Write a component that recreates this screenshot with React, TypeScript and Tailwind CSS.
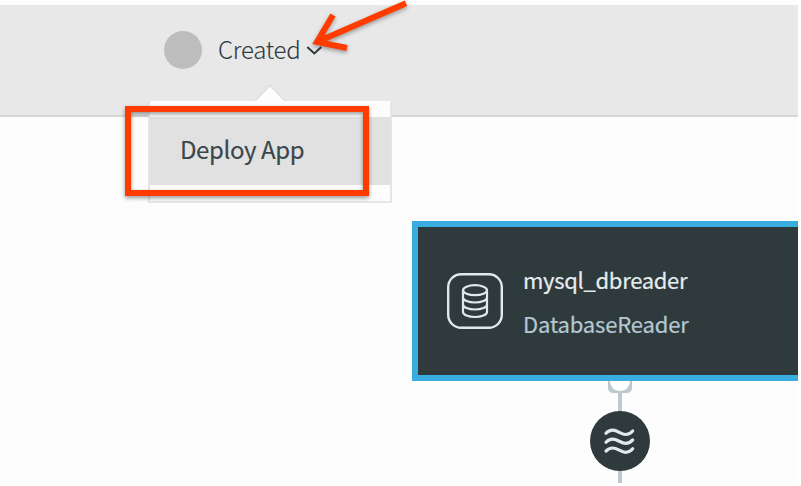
import React from 'react';

function StatusHeader() {
  return (
    <header className="h-[112px] w-full border-b-2 border-[#d6d6d6] bg-[#e8e8e8] pl-[164px] pt-[26px]">
      <div className="flex h-[38px] items-center">
        <span className="size-[38px] rounded-full bg-[#bdbdbd]" />
        <span className="ml-[16px] w-[82px] whitespace-nowrap pb-[2px] text-[24px] font-light leading-[36px] tracking-[-0.25px] text-[#2f3a3d] [-webkit-text-stroke:0.1px_#2f3a3d]">
          Created
        </span>
        <svg className="ml-[6px]" width="16" height="10" viewBox="0 0 16 10" fill="none">
          <path d="M1.300 2 8.300 8.500 15.300 2" stroke="#2f3a3d" strokeWidth="2" />
        </svg>
      </div>
    </header>
  );
}

function StatusMenu() {
  return (
    <div className="absolute left-[148px] top-[101px] h-[102px] w-[244px] border-2 border-t-0 border-[#e6e6e6] bg-[#fdfdfd] pt-4">
      <svg className="absolute left-[104px] top-[-18px]" width="32" height="19" viewBox="0 0 32 19">
        <path d="M0 18 16 1 32 18" fill="#dfdfdf" />
        <path d="M2 18 16 3.500 30 18V19H2Z" fill="#fdfdfd" />
      </svg>
      <button className="flex h-[68px] w-full items-center bg-[#e1e1e1] pb-[4px] pl-[30px] text-[24px] leading-[36px] tracking-[-0.4px] text-[#3a464a] [-webkit-text-stroke:0.15px_#3a464a]">
        Deploy App
      </button>
    </div>
  );
}

function ReaderNode() {
  return (
    <section className="absolute left-[412px] top-[221px] flex h-[160px] w-[386px] items-center border-6 border-r-0 border-[#3aade0] bg-[#2f3a3d] pl-[29px]">
      <svg width="56" height="56" viewBox="0 0 56 56" fill="none" stroke="#e1e9ec" strokeWidth="2.2">
        <rect x="1.200" y="1.200" width="53.600" height="53.600" rx="13" strokeWidth="2.4" />
        <ellipse cx="28" cy="17.2" rx="12" ry="5" />
        <path d="M16 17.2V39c0 2.8 5.4 5 12 5s12-2.200 12-5V17.200M16 24.500c0 2.800 5.400 5 12 5s12-2.200 12-5M16 31.500c0 2.800 5.400 5 12 5s12-2.200 12-5" />
      </svg>
      <div className="ml-[20px] flex flex-col text-[22px] leading-[44px]">
        <span className="tracking-[-0.3px] text-[#e6edef] [-webkit-text-stroke:0.2px_#e6edef]">mysql_dbreader</span>
        <span className="tracking-[-0.15px] text-[#b5c8d2] [-webkit-text-stroke:0.2px_#b5c8d2]">DatabaseReader</span>
      </div>
    </section>
  );
}

function StreamConnector() {
  return (
    <svg className="absolute left-[588px] top-[381px]" width="64" height="102" viewBox="0 0 64 102" fill="none">
      <path d="M32 10V102" stroke="#bcc9ce" strokeWidth="4" />
      <path d="M20 0H44V7Q44 12 38 12H26Q20 12 20 7Z" fill="#bcc9ce" />
      <path d="M22 0C22.500 6 26 10 32 10S41.500 6 42 0Z" fill="#fff" />
      <circle cx="32" cy="60" r="30" fill="#2f3a3d" />
      <g stroke="#e1e9ec" strokeWidth="3.200" strokeLinecap="round">
        <path d="M18 52.300C20 50 22 49.200 24.700 49.200C29.500 49.200 33 53.500 37.700 53.500C41 53.500 43 52 44.700 50" />
        <path d="M18 61.200C20 58.900 22 58.100 24.700 58.100C29.500 58.100 33 62.400 37.700 62.400C41 62.400 43 60.900 44.700 58.900" />
        <path d="M18 70.100C20 67.800 22 67 24.700 67C29.500 67 33 71.300 37.700 71.300C41 71.300 43 69.800 44.700 67.800" />
      </g>
    </svg>
  );
}

function Callouts() {
  return (
    <>
      <div className="absolute left-[125px] top-[106px] h-[90px] w-[244px] border-6 border-[#ff3b00] drop-shadow-[0_2px_2px_rgba(0,0,0,0.4)]" />
      <svg
        className="absolute left-[300px] top-0 drop-shadow-[0_2px_2px_rgba(0,0,0,0.35)]"
        width="120"
        height="65"
        viewBox="0 0 120 65"
        fill="none"
      >
        <path d="M106 3.200 18 41.500M33 15 17 42 47 48" stroke="#ff3b00" strokeWidth="6" />
      </svg>
    </>
  );
}

export default function App() {
  return (
    <div className="h-[486px] w-[801px] overflow-hidden bg-white font-['Noto_Sans_CJK_SC',sans-serif]">
      <main className="relative h-[483px] w-[798px] overflow-hidden bg-[#fdfdfd] pt-[5px]">
        <StatusHeader />
        <StatusMenu />
        <ReaderNode />
        <StreamConnector />
        <Callouts />
      </main>
    </div>
  );
}
